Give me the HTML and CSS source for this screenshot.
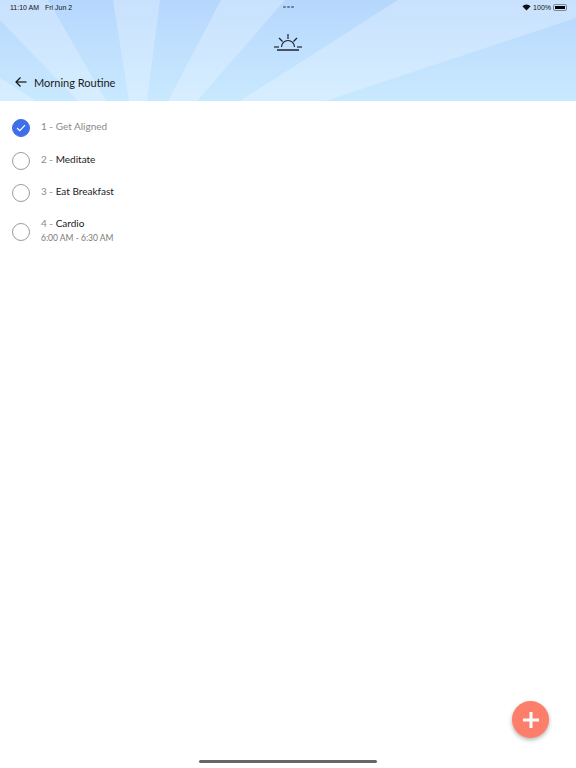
FILE: index.html
```html
<!DOCTYPE html>
<html lang="en">
<head>
    <meta charset="UTF-8">
    <title>Morning Routine</title>
    <link rel="stylesheet" href="styles.css">
</head>
<body>
    <div class="header">
        <svg class="rays" width="576" height="101" viewBox="0 0 576 101">
            <polygon points="0,20 0,0 48,0 106,101 78,101" fill="#fff" opacity="0.25"/>
            <polygon points="0,78 36,101 0,101" fill="#fff" opacity="0.25"/>
            <polygon points="113,0 160,0 147,101 129,101" fill="#fff" opacity="0.25"/>
            <polygon points="221,0 285,0 197,101 168,101" fill="#fff" opacity="0.25"/>
            <polygon points="398,0 576,0 576,18 325,101 240,101" fill="#fff" opacity="0.25"/>
        </svg>
        <div class="statusbar">
            <span class="status-left">11:10 AM&nbsp;&nbsp; Fri Jun 2</span>
            <span class="dots"><i></i><i></i><i></i></span>
            <span class="status-right">
                <svg width="9" height="7" viewBox="0 0 10 8">
                    <path d="M5 7.5 L0.3 2.6 A6.8 6.8 0 0 1 9.7 2.6 Z" fill="#111"/>
                </svg>
                <span>100%</span>
                <span class="battery"><b></b></span>
            </span>
        </div>
        <div class="logo">
            <svg width="30" height="20" viewBox="0 0 30 20" fill="none" stroke="#1c2430" stroke-width="1.2">
                <path d="M15 1 V6"/>
                <path d="M6 5 L9.5 8.5"/>
                <path d="M24 5 L20.5 8.5"/>
                <path d="M1 14 H6"/>
                <path d="M24 14 H29"/>
                <path d="M8.5 14 A6.5 6.5 0 0 1 21.5 14"/>
                <path d="M4 17 H26" stroke-width="1.5"/>
            </svg>
        </div>
        <div class="navrow">
            <svg width="12" height="10" viewBox="0 0 12 10" fill="none" stroke="#111" stroke-width="1.2">
                <path d="M11.5 5 H1"/>
                <path d="M5.5 0.5 L1 5 L5.5 9.5"/>
            </svg>
            <span>Morning Routine</span>
        </div>
    </div>
    <ul class="tasks">
        <li class="task done">
            <span class="circle">
                <svg width="10" height="8" viewBox="0 0 10 8" fill="none" stroke="#fff" stroke-width="1.2">
                    <path d="M1 4 L3.8 6.6 L9 1.2"/>
                </svg>
            </span>
            <div class="tasktext"><span class="num">1 - </span><span class="name">Get Aligned</span></div>
        </li>
        <li class="task">
            <span class="circle"></span>
            <div class="tasktext"><span class="num">2 - </span><span class="name">Meditate</span></div>
        </li>
        <li class="task">
            <span class="circle"></span>
            <div class="tasktext"><span class="num">3 - </span><span class="name">Eat Breakfast</span></div>
        </li>
        <li class="task timed">
            <span class="circle"></span>
            <div class="tasktext">
                <div><span class="num">4 - </span><span class="name">Cardio</span></div>
                <div class="time">6:00 AM - 6:30 AM</div>
            </div>
        </li>
    </ul>
    <div class="fab">
        <svg width="18" height="18" viewBox="0 0 18 18" fill="none" stroke="#fff" stroke-width="3">
            <path d="M9 1 V17"/>
            <path d="M1 9 H17"/>
        </svg>
    </div>
    <div class="homebar"></div>
</body>
</html>
```
FILE: styles.css
```css
* {
    box-sizing: border-box;
}

html, body {
    margin: 0;
    padding: 0;
    height: 100%;
    background: #fff;
    overflow: hidden;
    font-family: Lato, "Noto Sans", sans-serif;
}

body {
    position: relative;
}

.header {
    position: relative;
    height: 101px;
    background: linear-gradient(#b6d7fd, #c9e9ff);
    overflow: hidden;
}

.rays {
    position: absolute;
    left: 0;
    top: 0;
}

.statusbar {
    position: relative;
    height: 14px;
    padding: 0 9px 0 10px;
    display: flex;
    align-items: center;
    font-family: "Liberation Sans", sans-serif;
    font-size: 7px;
    color: #111;
}

.status-left {
    flex: 1;
}

.dots {
    display: flex;
    gap: 1.5px;
}

.dots i {
    width: 2.5px;
    height: 2.5px;
    border-radius: 50%;
    background: #6b7a8c;
}

.status-right {
    flex: 1;
    display: flex;
    justify-content: flex-end;
    align-items: center;
    gap: 2px;
}

.battery {
    width: 14px;
    height: 7px;
    padding: 1px;
    border: 1px solid #7d8794;
    border-radius: 2px;
    display: block;
}

.battery b {
    display: block;
    height: 100%;
    background: #000;
}

.logo {
    position: relative;
    height: 20px;
    margin-top: 19px;
    display: flex;
    justify-content: center;
}

.navrow {
    position: relative;
    margin-top: 19px;
    padding-left: 15px;
    display: flex;
    align-items: center;
    gap: 7px;
    height: 20px;
    font-size: 11px;
    color: #1a1a1a;
}

.tasks {
    list-style: none;
    margin: 0;
    padding: 11px 0 0 12px;
}

.task {
    display: flex;
    align-items: center;
    height: 32.5px;
    gap: 11px;
}

.task.timed {
    height: 44px;
}

.circle {
    width: 18px;
    height: 18px;
    flex: none;
    border: 1px solid #9b9b9b;
    border-radius: 50%;
    display: flex;
    align-items: center;
    justify-content: center;
}

.done .circle {
    background: #3e6fe8;
    border-color: #3e6fe8;
}

.tasktext {
    font-size: 10px;
    color: #1a1a1a;
    margin-top: -4px;
}

.num {
    color: #8a8a8a;
    font-size: 10px;
}

.done .name {
    color: #8a8a8a;
}

.time {
    margin-top: 4px;
    font-size: 8.5px;
    color: #7a7a7a;
}

.fab {
    position: absolute;
    left: 512px;
    top: 701px;
    width: 37px;
    height: 37px;
    border-radius: 50%;
    background: #fd7f6b;
    box-shadow: 0 2px 4px rgba(0,0,0,0.3);
    display: flex;
    align-items: center;
    justify-content: center;
}

.homebar {
    position: absolute;
    left: 199px;
    top: 760px;
    width: 178px;
    height: 3px;
    border-radius: 2px;
    background: #666;
}
```
